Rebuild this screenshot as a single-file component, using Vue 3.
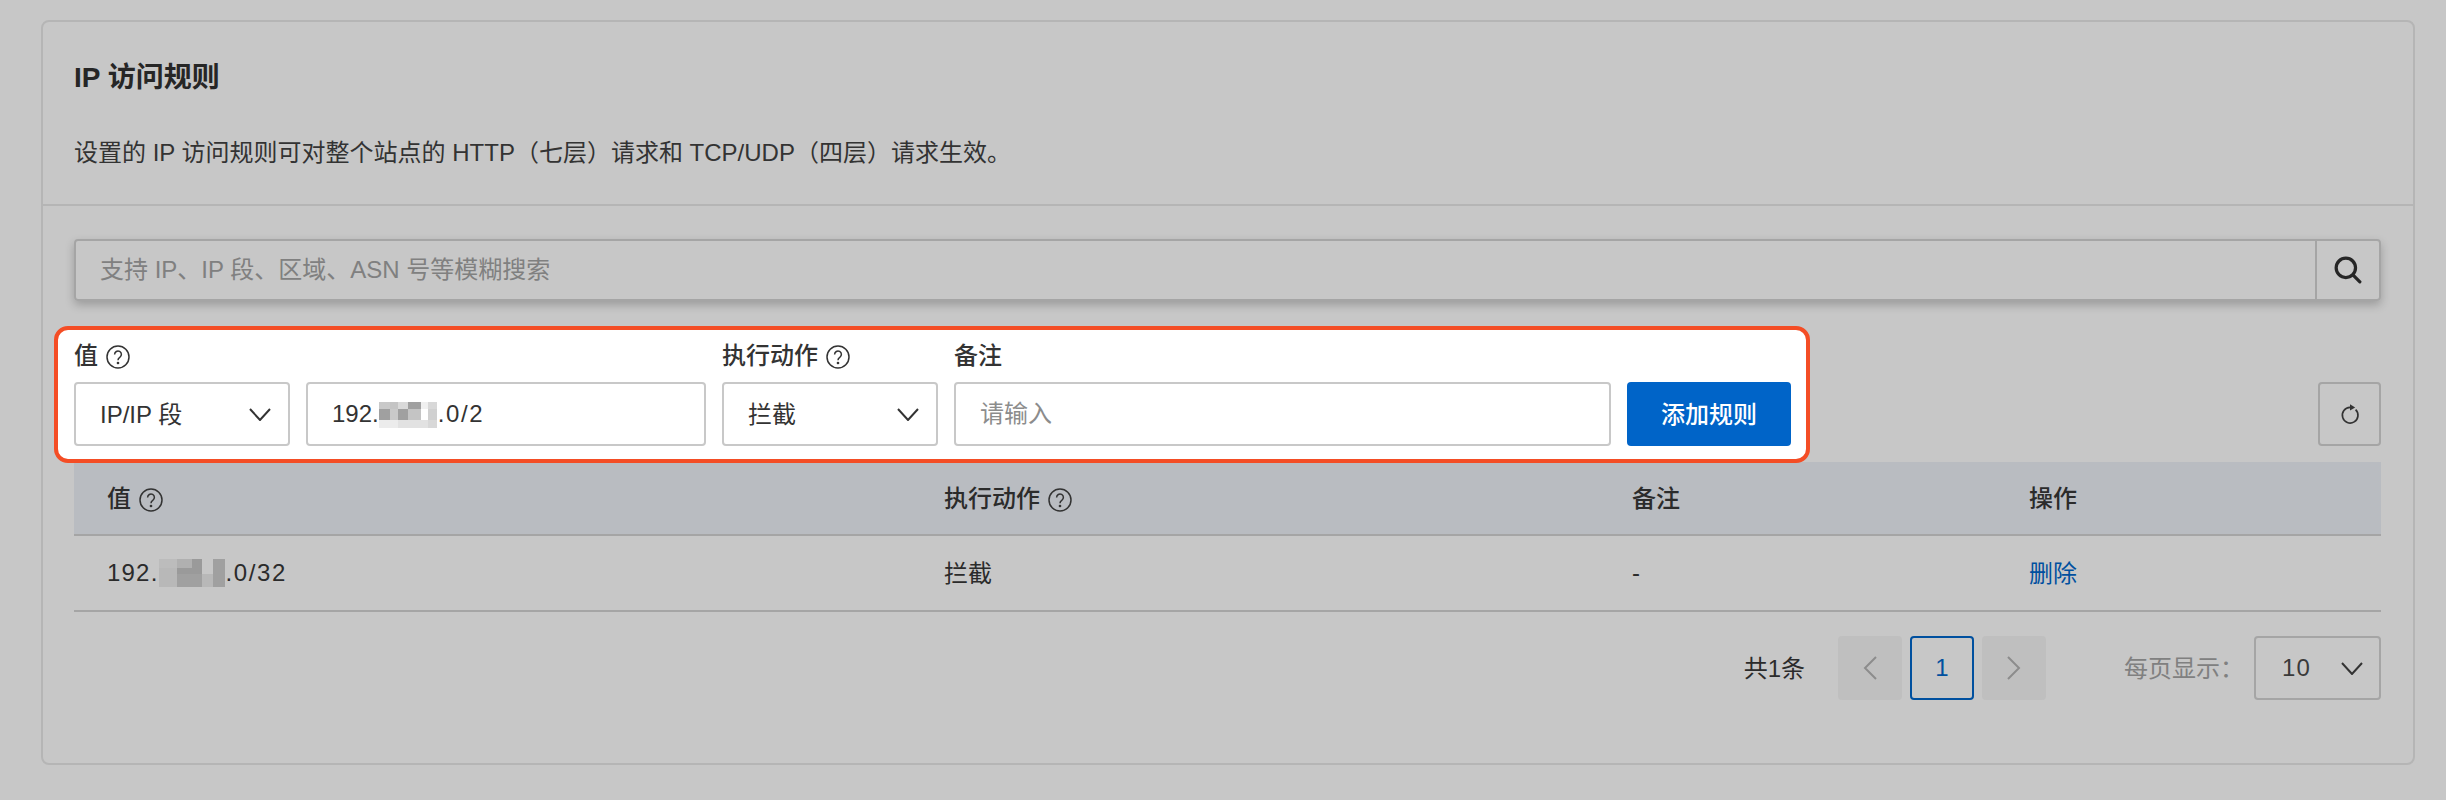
<script setup>
const inputMosaic = {
  w: 58, h: 26,
  xs: [0, 11, 19, 29, 42, 49, 58],
  ys: [0, 7, 18, 26],
  cells: [
    ['#c9c9c9', '#c4c4c4', '#d9d9d9', '#a0a0a0', '#f0f0f0', '#d8d8d8'],
    ['#a0a0a0', '#c9c9c9', '#a0a0a0', '#c4c4c4', '#ffffff', '#d0d0d0'],
    ['#ececec', '#ececec', '#e2e2e2', '#e2e2e2', '#e2e2e2', '#d8d8d8']
  ]
}
const rowMosaic = {
  w: 66, h: 28,
  xs: [0, 18, 33, 43, 54, 66],
  ys: [0, 9, 15, 28],
  cells: [
    ['#bcbcbc', '#b0b0b0', '#9a9a9a', '#c7c7c7', '#a0a0a0'],
    ['#b8b8b8', '#9a9a9a', '#9a9a9a', '#c7c7c7', '#a0a0a0'],
    ['#b8b8b8', '#a0a0a0', '#a0a0a0', '#b8b8b8', '#a0a0a0']
  ]
}
function rects(m) {
  const out = []
  m.cells.forEach((row, r) => row.forEach((fill, c) => {
    out.push({
      key: r + '-' + c,
      x: m.xs[c], y: m.ys[r],
      width: m.xs[c + 1] - m.xs[c],
      height: m.ys[r + 1] - m.ys[r],
      fill
    })
  }))
  return out
}
const inputRects = rects(inputMosaic)
const rowRects = rects(rowMosaic)
</script>

<template>
  <div class="page">
    <section class="card">
      <header class="head">
        <h2 class="title">IP 访问规则</h2>
        <p class="desc">设置的 IP 访问规则可对整个站点的 HTTP（七层）请求和 TCP/UDP（四层）请求生效。</p>
      </header>
      <div class="body">
        <div class="search">
          <input class="search-input" placeholder="支持 IP、IP 段、区域、ASN 号等模糊搜索" />
          <button class="search-btn" aria-label="搜索">
            <svg width="28" height="28" viewBox="0 0 26 26" fill="none" stroke="#262626" stroke-width="3" stroke-linecap="round">
              <circle cx="11" cy="11" r="9" />
              <path d="M17.8 17.8 24 24" />
            </svg>
          </button>
        </div>

        <div class="toolbar">
          <form class="rule-form" @submit.prevent>
            <div class="field">
              <div class="label">值
                <svg class="help" viewBox="0 0 24 24" fill="none" stroke="#333" stroke-width="1.5">
                  <circle cx="12" cy="12" r="11" />
                  <path d="M8.6 9.4a3.4 3.4 0 1 1 5.2 2.9c-1.2.8-1.8 1.4-1.8 2.9" />
                  <circle cx="12" cy="18" r=".6" fill="#333" />
                </svg>
              </div>
              <div class="controls">
                <div class="control select w216">
                  <span class="cjk">IP/IP 段</span>
                  <svg class="chev" viewBox="0 0 22 13" fill="none" stroke="#333" stroke-width="2"><path d="M1 1l10 11L21 1" /></svg>
                </div>
                <div class="control w400">
                  <span>192.</span><svg class="mosaic input-mosaic" :width="inputMosaic.w" :height="inputMosaic.h"><rect v-for="r in inputRects" :key="r.key" :x="r.x" :y="r.y" :width="r.width" :height="r.height" :fill="r.fill" /></svg><span class="tail">.0/2</span>
                </div>
              </div>
            </div>
            <div class="field">
              <div class="label">执行动作
                <svg class="help" viewBox="0 0 24 24" fill="none" stroke="#333" stroke-width="1.5">
                  <circle cx="12" cy="12" r="11" />
                  <path d="M8.6 9.4a3.4 3.4 0 1 1 5.2 2.9c-1.2.8-1.8 1.4-1.8 2.9" />
                  <circle cx="12" cy="18" r=".6" fill="#333" />
                </svg>
              </div>
              <div class="control select w216">
                <span class="cjk">拦截</span>
                <svg class="chev" viewBox="0 0 22 13" fill="none" stroke="#333" stroke-width="2"><path d="M1 1l10 11L21 1" /></svg>
              </div>
            </div>
            <div class="field">
              <div class="label">备注</div>
              <input class="control text-input w657" placeholder="请输入" />
            </div>
            <button class="add-btn"><span class="cjk">添加规则</span></button>
          </form>
          <button class="refresh" aria-label="刷新">
            <svg width="20" height="22" viewBox="0 0 20 22" fill="none" stroke="#333" stroke-width="1.7">
              <path d="M10 4.4A7.8 7.8 0 1 0 15.6 6.6" />
              <path d="M10 1.2 15.2 4.4 10 7.6z" fill="#333" stroke="none" />
            </svg>
          </button>
        </div>

        <div class="table">
          <div class="tr th">
            <div class="cell">值
              <svg class="help" viewBox="0 0 24 24" fill="none" stroke="#333" stroke-width="1.5">
                <circle cx="12" cy="12" r="11" />
                <path d="M8.6 9.4a3.4 3.4 0 1 1 5.2 2.9c-1.2.8-1.8 1.4-1.8 2.9" />
                <circle cx="12" cy="18" r=".6" fill="#333" />
              </svg>
            </div>
            <div class="cell">执行动作
              <svg class="help" viewBox="0 0 24 24" fill="none" stroke="#333" stroke-width="1.5">
                <circle cx="12" cy="12" r="11" />
                <path d="M8.6 9.4a3.4 3.4 0 1 1 5.2 2.9c-1.2.8-1.8 1.4-1.8 2.9" />
                <circle cx="12" cy="18" r=".6" fill="#333" />
              </svg>
            </div>
            <div class="cell">备注</div>
            <div class="cell">操作</div>
          </div>
          <div class="tr td">
            <div class="cell">
              <span class="num">192.</span><svg class="mosaic" :width="rowMosaic.w" :height="rowMosaic.h"><rect v-for="r in rowRects" :key="r.key" :x="r.x" :y="r.y" :width="r.width" :height="r.height" :fill="r.fill" /></svg><span class="tail">.0/32</span>
            </div>
            <div class="cell"><span class="cjk">拦截</span></div>
            <div class="cell">-</div>
            <div class="cell"><a class="link cjk">删除</a></div>
          </div>
        </div>

        <div class="pager">
          <span class="total cjk">共1条</span>
          <div class="pages">
            <span class="page-btn off">
              <svg width="14" height="24" viewBox="0 0 14 24" fill="none" stroke="#8c8c8c" stroke-width="2"><path d="M13 1 2 12l11 11" /></svg>
            </span>
            <span class="page-btn cur">1</span>
            <span class="page-btn off">
              <svg width="14" height="24" viewBox="0 0 14 24" fill="none" stroke="#8c8c8c" stroke-width="2"><path d="M1 1l11 11L1 23" /></svg>
            </span>
          </div>
          <span class="size-label cjk">每页显示：</span>
          <div class="size-select">
            <span class="num">10</span>
            <svg class="chev" viewBox="0 0 22 13" fill="none" stroke="#333" stroke-width="2"><path d="M1 1l10 11L21 1" /></svg>
          </div>
        </div>
      </div>
    </section>
  </div>
</template>

<style>
html, body { margin: 0; background: #c7c7c7; }
</style>

<style scoped>
.page {
  box-sizing: border-box;
  width: 2446px;
  height: 800px;
  overflow: hidden;
  padding: 20px 31px 0 41px;
  background: #c7c7c7;
  font-family: "Liberation Sans", "Noto Sans CJK SC", sans-serif;
  font-size: 24px;
  color: #2b2b2b;
}
.cjk {
  display: inline-block;
  padding-bottom: 3px;
}
.num { letter-spacing: 1.2px; }
.tail { margin-left: 1px; letter-spacing: 1.6px; }
.card {
  box-sizing: border-box;
  height: 745px;
  border: 2px solid #b5b5b5;
  border-radius: 8px;
}
.head {
  box-sizing: border-box;
  height: 184px;
  padding: 36px 31px 0;
  border-bottom: 2px solid #b5b5b5;
}
.title {
  margin: 0;
  font-size: 28px;
  font-weight: 700;
  line-height: 40px;
  color: #262626;
}
.desc {
  margin: 37px 0 0;
  line-height: 36px;
  color: #333;
}
.body {
  padding: 33px 32px 0 31px;
}
.search {
  display: flex;
  box-sizing: border-box;
  height: 62px;
  border: 2px solid #a5a5a5;
  border-radius: 4px;
  box-shadow: 0 4px 10px rgba(0, 0, 0, .22);
}
.search-input {
  flex: 1;
  min-width: 0;
  box-sizing: border-box;
  padding: 0 24px;
  border: 0;
  outline: 0;
  background: transparent;
  font: inherit;
}
.search-input::placeholder {
  color: #808080;
  opacity: 1;
}
.text-input::placeholder {
  color: #8c8c8c;
  opacity: 1;
}
.search-btn {
  width: 64px;
  padding: 0;
  display: flex;
  align-items: center;
  justify-content: center;
  border: 0;
  border-left: 2px solid #a5a5a5;
  background: transparent;
}
.toolbar {
  display: flex;
  justify-content: space-between;
  align-items: flex-end;
  margin-top: 25px;
}
.rule-form {
  position: relative;
  z-index: 1;
  display: flex;
  align-items: flex-end;
  gap: 16px;
  box-sizing: border-box;
  height: 137px;
  margin: 0 0 -1px -20px;
  padding: 8px 15px 13px 16px;
  border: 4px solid #f44d25;
  border-radius: 14px;
  background: #fff;
}
.field {
  display: flex;
  flex-direction: column;
}
.label {
  display: flex;
  align-items: center;
  gap: 8px;
  box-sizing: border-box;
  height: 34px;
  margin-bottom: 10px;
  padding-bottom: 3px;
  font-weight: 500;
  color: #333;
}
.help {
  flex: none;
  width: 24px;
  height: 24px;
  margin-top: 6px;
}
.controls {
  display: flex;
  gap: 16px;
}
.control {
  display: flex;
  align-items: center;
  box-sizing: border-box;
  height: 64px;
  padding: 0 24px;
  border: 2px solid #c8c8c8;
  border-radius: 4px;
  background: #fff;
  font: inherit;
  color: #333;
  outline: 0;
}
.select { justify-content: space-between; padding-right: 17px; }
.w216 { width: 216px; }
.w400 { width: 400px; }
.w657 { width: 657px; }
.chev {
  flex: none;
  width: 22px;
  height: 13px;
}
.mosaic {
  display: block;
  flex: none;
}
.input-mosaic { margin-top: 2px; }
.add-btn {
  width: 164px;
  height: 64px;
  padding: 0;
  border: 0;
  border-radius: 4px;
  background: #0064c8;
  color: #fff;
  font: inherit;
  font-weight: 500;
}
.refresh {
  display: flex;
  align-items: center;
  justify-content: center;
  box-sizing: border-box;
  width: 63px;
  height: 64px;
  margin-bottom: 16px;
  padding: 0;
  border: 2px solid #a5a5a5;
  border-radius: 4px;
  background: transparent;
}
.tr {
  display: grid;
  grid-template-columns: 837px 688px 397px 1fr;
  box-sizing: border-box;
  border-bottom: 2px solid #a5a5a5;
}
.th {
  height: 74px;
  background: #b9bcc1;
  font-weight: 500;
}
.td { height: 76px; }
.cell {
  display: flex;
  align-items: center;
  gap: 8px;
  padding-left: 33px;
}
.th .cell { padding-bottom: 3px; }
.td .cell { gap: 0; }
.link { color: #00509f; }
.pager {
  display: flex;
  align-items: center;
  height: 64px;
  margin-top: 24px;
}
.total { margin-left: auto; margin-right: 33px; }
.pages {
  display: flex;
  gap: 8px;
}
.page-btn {
  display: flex;
  align-items: center;
  justify-content: center;
  box-sizing: border-box;
  width: 64px;
  height: 64px;
  border-radius: 4px;
}
.off { background: #bfbfbf; }
.cur {
  border: 2px solid #00509f;
  color: #00509f;
  font-weight: 500;
}
.size-label {
  margin-left: 78px;
  margin-right: 10px;
  color: #808080;
}
.size-select {
  display: flex;
  align-items: center;
  justify-content: space-between;
  box-sizing: border-box;
  width: 127px;
  height: 64px;
  padding: 0 16px 0 26px;
  border: 2px solid #a5a5a5;
  border-radius: 4px;
  color: #3a3a3a;
}
</style>
